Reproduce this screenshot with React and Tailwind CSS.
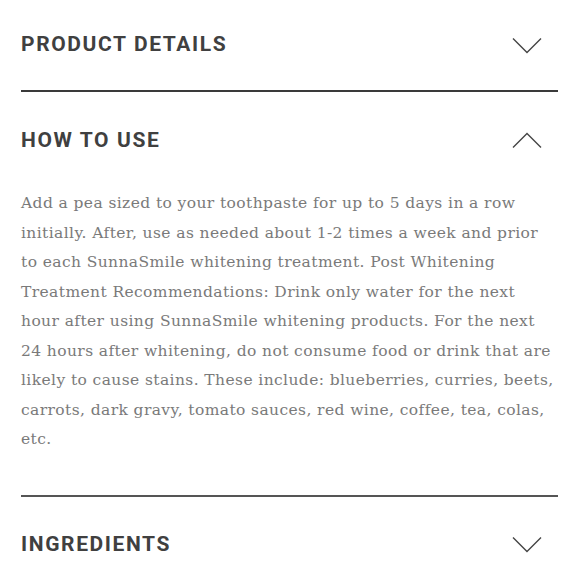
import React from "react";

const lines = [
  "Add a pea sized to your toothpaste for up to 5 days in a row",
  "initially. After, use as needed about 1-2 times a week and prior",
  "to each SunnaSmile whitening treatment. Post Whitening",
  "Treatment Recommendations: Drink only water for the next",
  "hour after using SunnaSmile whitening products. For the next",
  "24 hours after whitening, do not consume food or drink that are",
  "likely to cause stains. These include: blueberries, curries, beets,",
  "carrots, dark gravy, tomato sauces, red wine, coffee, tea, colas,",
  "etc.",
];

function Chevron({ up }) {
  return (
    <svg width="30" height="17" viewBox="0 0 30 17" className="text-[#454545]">
      <polyline
        points={up ? "1,15.5 15,1.5 29,15.5" : "1,1.5 15,15.5 29,1.5"}
        fill="none"
        stroke="currentColor"
        strokeWidth="1.4"
      />
    </svg>
  );
}

function Header({ title, up, h }) {
  return (
    <div className={`flex items-center justify-between ${h}`}>
      <h2 className="font-['Roboto',sans-serif] text-[21px] font-bold tracking-[1.6px] text-[#404040]">
        {title}
      </h2>
      <div className="mr-[16px]">
        <Chevron up={up} />
      </div>
    </div>
  );
}

export default function App() {
  return (
    <div className="w-[580px] h-[580px] overflow-hidden bg-white pl-[21px] pr-[22px]">
      <div className="border-b-2 border-[#3a3a3a]">
        <Header title="PRODUCT DETAILS" h="h-[90px]" />
      </div>
      <div className="border-b-2 border-[#555555] pb-[40px]">
        <Header title="HOW TO USE" up h="h-[97px]" />
        <p className="font-['DejaVu_Serif',serif] text-[15.5px] leading-[29.5px] tracking-[0.4px] text-[#7a7a7a]">
          {lines.map((l, i) => (
            <span key={i} className="block whitespace-nowrap">
              {l}
            </span>
          ))}
        </p>
      </div>
      <Header title="INGREDIENTS" h="h-[96px]" />
    </div>
  );
}
